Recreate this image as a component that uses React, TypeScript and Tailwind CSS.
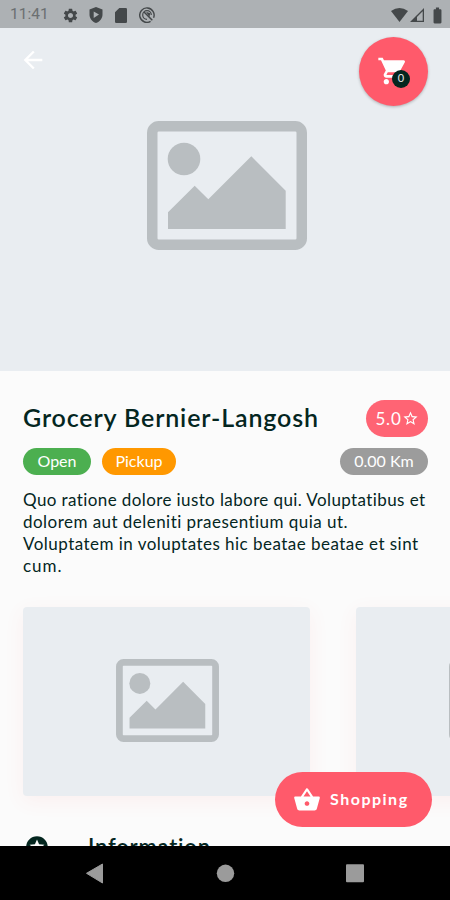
import { MdArrowBack, MdBatteryFull, MdSettings, MdShoppingBasket, MdShoppingCart, MdStarBorder, MdStars } from "react-icons/md"

const restaurant = {
  name: "Grocery Bernier-Langosh",
  rate: "5.0",
  distance: "0.00 Km",
  description: [
    { text: "Quo ratione dolore iusto labore qui. Voluptatibus et", spacing: "tracking-[0.4px]" },
    { text: "dolorem aut deleniti praesentium quia ut.", spacing: "tracking-[0.46px]" },
    { text: "Voluptatem in voluptates hic beatae beatae et sint", spacing: "tracking-[0.47px]" },
    { text: "cum.", spacing: "tracking-[1px]" },
  ],
}

function Placeholder({ className }: { className: string }) {
  return (
    <svg viewBox="0 0 160 129" className={className} fill="#b9bec1">
      <rect x="5.25" y="5.25" width="149.5" height="118.5" rx="6.5" fill="none" stroke="#b9bec1" strokeWidth="10.5" />
      <circle cx="37" cy="38" r="16.3" />
      <path d="M21 91.3 47.7 64.7 61.3 78.3 104.3 35.3 138.7 69.8V108H21z" />
    </svg>
  )
}

function StatusBar() {
  return (
    <div className="h-7 shrink-0 bg-[#adb1b4] flex items-center pl-[10px] pr-[3px] pt-[2px] text-[#44484a]">
      <span className="w-[52px] font-['Roboto'] text-[15.5px] leading-none text-[#6b6f71]">11:41</span>
      <MdSettings className="w-[17px] h-[17px]" />
      <svg viewBox="0 0 14 16" className="w-[14px] h-4 ml-[10px]" fill="currentColor">
        <path fillRule="evenodd" d="M7 0 13.5 2.6V7.5C13.5 11.5 10.8 14.6 7 16 3.2 14.6.5 11.5.5 7.5V2.6zM4.7 4.6V11L10 7.5z" />
      </svg>
      <svg viewBox="0 0 12 15" className="w-3 h-[15px] ml-[12px]" fill="currentColor">
        <path d="M4.3 0H10.7Q12 0 12 1.3V13.7Q12 15 10.7 15H1.3Q0 15 0 13.7V4.3z" />
      </svg>
      <svg viewBox="0 0 16 16" className="w-4 h-4 ml-3" fill="none" stroke="currentColor">
        <path d="M11.6 14.3A7.2 7.2 0 1 1 14.6 10.8" strokeWidth="1.4" />
        <path d="M8 12.3A4.3 4.3 0 1 1 12.3 8" strokeWidth="1.2" />
        <path d="M5 5 13.3 13.3" strokeWidth="1.5" />
        <path d="M7 4.8 11.3 6.2 10.4 10z" fill="currentColor" stroke="none" />
      </svg>
      <svg viewBox="0 0 17 14" className="w-[17px] h-[14px] ml-auto" fill="currentColor">
        <path d="M0 3Q8.5-2.8 17 3L8.5 14z" />
      </svg>
      <svg viewBox="0 0 14 14" className="w-[14px] h-[14px] ml-[2px]" fill="currentColor">
        <path fillRule="evenodd" d="M14 0V14H0zM12.7 3.2 5.5 10.4V12.7H12.7z" />
        <path d="M2 12.7 7 7.5V13H2z" />
      </svg>
      <MdBatteryFull className="w-[19px] h-[19px] ml-1" />
    </div>
  )
}

function Hero() {
  return (
    <div className="relative h-[343px] shrink-0 bg-[#e9edf1]">
      <Placeholder className="absolute left-[147px] top-[93px] w-[160px] h-[129px]" />
      <MdArrowBack className="absolute left-[19px] top-[18px] w-7 h-7 text-white" />
      <button className="absolute left-[359px] top-[9px] w-[69px] h-[69px] rounded-full bg-[#ff5a6b] shadow-[0_1px_3px_rgba(0,0,0,0.25)] flex items-center justify-center text-white">
        <MdShoppingCart className="w-[32px] h-[32px] -mt-px -ml-[2px]" />
        <span className="absolute left-[33px] top-[33px] w-[18px] h-[18px] rounded-full bg-[#04261f] text-[11px] leading-[15px] text-center text-gray-200">0</span>
      </button>
    </div>
  )
}

function Gallery() {
  return (
    <div className="mt-[30px] ml-[23px] flex gap-[46px] overflow-visible">
      {[0, 1].map((i) => (
        <div key={i} className="w-[287px] h-[189px] shrink-0 rounded bg-[#e9edf1] shadow-[0_5px_20px_rgba(255,90,80,0.07)]">
          <Placeholder className="w-[103px] h-[83px] ml-[93px] mt-[52px]" />
        </div>
      ))}
    </div>
  )
}

function NavBar() {
  return (
    <div className="relative h-[54px] shrink-0 bg-black">
      <svg viewBox="0 0 450 54" className="w-full h-full" fill="#9b9b9b">
        <path d="M86.5 27.3 102.5 18V37z" stroke="#9b9b9b" strokeLinejoin="round" />
        <circle cx="225.5" cy="27.3" r="8.7" />
        <rect x="346" y="18.3" width="18" height="18" rx="1" />
      </svg>
    </div>
  )
}

export default function App() {
  return (
    <div className="relative w-[450px] h-[900px] flex flex-col overflow-hidden bg-[#fbfbfb] font-['Lato',sans-serif] [font-variant-ligatures:none] text-[#04261f]">
      <StatusBar />
      <Hero />

      <main className="flex-1 min-h-0 pt-[29px]">
        <div className="flex items-center justify-between pl-[23px] pr-[22px]">
          <h1 className="-mt-[3px] text-[25px] leading-9 font-semibold tracking-[0.87px] whitespace-nowrap">{restaurant.name}</h1>
          <span className="w-[62px] h-[37px] rounded-full bg-[#ff6474] text-white text-[17px] tracking-[0.8px] flex items-center justify-center">
            {restaurant.rate}
            <MdStarBorder className="w-[17px] h-[17px]" />
          </span>
        </div>

        <div className="mt-[11px] flex items-center pl-[23px] pr-[22px] text-white text-[16px]">
          <span className="w-[68px] h-[27px] pb-px rounded-full bg-[#4caf50] flex items-center justify-center">Open</span>
          <span className="w-[74px] h-[27px] pb-px ml-[11px] rounded-full bg-[#ff9800] flex items-center justify-center">Pickup</span>
          <span className="w-[88px] h-[27px] pb-px ml-auto rounded-full bg-[#9c9c9c] flex items-center justify-center">{restaurant.distance}</span>
        </div>

        <p className="mt-[14px] pl-[23px] text-[17px] leading-[22px] whitespace-nowrap">
          {restaurant.description.map((line) => (
            <span key={line.text} className={`block ${line.spacing}`}>{line.text}</span>
          ))}
        </p>

        <Gallery />

        <div className="mt-[37px] pl-6 flex items-center">
          <MdStars className="w-[26px] h-[26px]" />
          <h2 className="ml-[38px] text-[22px] leading-7 font-semibold tracking-[0.8px]">Information</h2>
        </div>
      </main>

      <NavBar />

      <button className="absolute left-[275px] top-[772px] w-[157px] h-[55px] rounded-full bg-[#ff5a6b] text-white flex items-center pl-[18px]">
        <MdShoppingBasket className="w-7 h-7" />
        <span className="ml-[9px] -mt-px text-[16px] font-bold tracking-[1.5px]">Shopping</span>
      </button>
    </div>
  )
}
